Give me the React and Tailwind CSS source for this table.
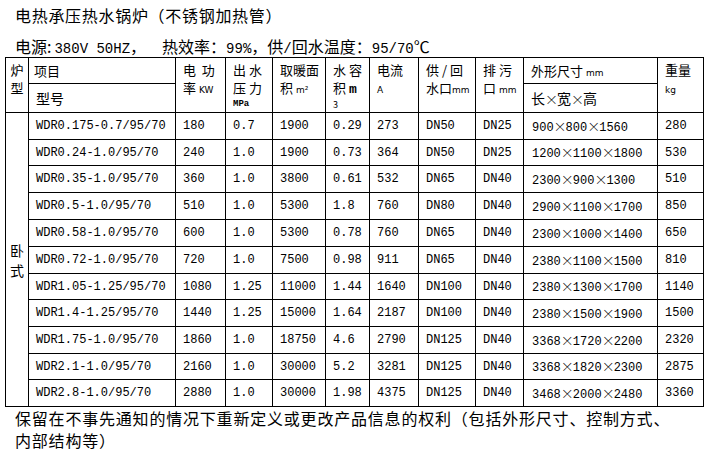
import React from "react";

const rows = [
  ["WDR0.175-0.7/95/70", "180", "0.7", "1900", "0.29", "273", "DN50", "DN25", ["900", "800", "1560"], "280"],
  ["WDR0.24-1.0/95/70", "240", "1.0", "1900", "0.73", "364", "DN50", "DN25", ["1200", "1100", "1800"], "530"],
  ["WDR0.35-1.0/95/70", "360", "1.0", "3800", "0.61", "532", "DN65", "DN40", ["2300", "900", "1300"], "510"],
  ["WDR0.5-1.0/95/70", "510", "1.0", "5300", "1.8", "760", "DN80", "DN40", ["2900", "1100", "1700"], "850"],
  ["WDR0.58-1.0/95/70", "600", "1.0", "5300", "0.78", "760", "DN65", "DN40", ["2300", "1000", "1400"], "650"],
  ["WDR0.72-1.0/95/70", "720", "1.0", "7500", "0.98", "911", "DN65", "DN40", ["2380", "1100", "1500"], "810"],
  ["WDR1.05-1.25/95/70", "1080", "1.25", "11000", "1.44", "1640", "DN100", "DN40", ["2380", "1300", "1700"], "1140"],
  ["WDR1.4-1.25/95/70", "1440", "1.25", "15000", "1.64", "2187", "DN100", "DN40", ["2380", "1500", "1900"], "1500"],
  ["WDR1.75-1.0/95/70", "1860", "1.0", "18750", "4.6", "2790", "DN125", "DN40", ["3368", "1720", "2200"], "2320"],
  ["WDR2.1-1.0/95/70", "2160", "1.0", "30000", "5.2", "3281", "DN125", "DN40", ["3368", "1820", "2300"], "2875"],
  ["WDR2.8-1.0/95/70", "2880", "1.0", "30000", "1.98", "4375", "DN125", "DN40", ["3468", "2000", "2480"], "3360"],
];

const heights = ["h-[27px]", "h-[26px]", "h-[27px]", "h-[27px]", "h-[27px]", "h-[27px]", "h-[26px]", "h-[27px]", "h-[27px]", "h-[26px]", "h-[27px]"];

function Times() {
  return (
    <span className="inline-block w-[12px] text-center font-['Noto_Sans_CJK_SC',sans-serif] text-[13px] font-light">×</span>
  );
}

function Lat({ children }) {
  return <span className="font-['DejaVu_Sans',sans-serif] text-[9px] text-black">{children}</span>;
}

function Mono({ children, className = "" }) {
  return <span className={"font-['Liberation_Mono',monospace] text-[14px] tracking-normal " + className}>{children}</span>;
}

const th = "border border-black align-top text-left font-normal pl-[7px] pr-[2px] pt-[3px] leading-[18px] text-[13px]";
const td = "border border-black align-middle text-left pl-[7px] pr-0 text-[12px] leading-none whitespace-nowrap";

export default function App() {
  return (
    <div className="w-[708px] h-[455px] bg-white text-black overflow-hidden antialiased font-['Noto_Sans_CJK_SC',sans-serif]">
      <div className="pl-[15px] h-[30px] leading-[30px] text-[16px] tracking-[0.7px]">电热承压热水锅炉（不锈钢加热管）</div>
      <div className="pl-[15px] h-[27px] leading-[32px] text-[16px] whitespace-nowrap flex items-baseline">
        <span>电源:</span>
        <Mono className="ml-[3px]">380V 50HZ</Mono>
        <span>，</span>
        <span className="inline-block w-[16px]"></span>
        <span>热效率：</span>
        <Mono>99%</Mono>
        <span>，供</span>
        <Mono>/</Mono>
        <span>回水温度：</span>
        <Mono>95/70</Mono>
        <span>℃</span>
      </div>
      <table className="ml-[5px] w-[699px] table-fixed border-collapse border border-black">
        <colgroup>
          <col className="w-[23px]" />
          <col className="w-[147px]" />
          <col className="w-[50px]" />
          <col className="w-[47px]" />
          <col className="w-[53px]" />
          <col className="w-[44px]" />
          <col className="w-[49px]" />
          <col className="w-[57px]" />
          <col className="w-[48px]" />
          <col className="w-[134px]" />
          <col className="w-[46px]" />
        </colgroup>
        <thead>
          <tr className="h-[26px]">
            <th rowSpan={2} className="border border-black align-top text-center font-normal text-[13px] leading-[18px] pt-[3px] px-0">
              炉<br />型
            </th>
            <th className="border border-black align-middle text-left font-normal pl-[5px] text-[13px] leading-none">项目</th>
            <th rowSpan={2} className={th}>
              电&nbsp;&nbsp;功<br />率 <Lat>KW</Lat>
            </th>
            <th rowSpan={2} className={th + " pl-[4px]"}>
              出&nbsp;水<br />压&nbsp;力<br />
              <span className="font-['Liberation_Mono',monospace] text-[9px] font-bold leading-[14px] block">MPa</span>
            </th>
            <th rowSpan={2} className={th}>
              取暖面<br />积 <Lat>m²</Lat>
            </th>
            <th rowSpan={2} className={th}>
              水&nbsp;容<br />积&nbsp;<span className="font-['Liberation_Mono',monospace] font-bold text-[13px]">m</span>
              <br />
              <span className="text-[9px] leading-[12px] block">3</span>
            </th>
            <th rowSpan={2} className={th}>
              电流<br /><Lat>A</Lat>
            </th>
            <th rowSpan={2} className={th}>
              供&nbsp;/&nbsp;回<br />水口<Lat>mm</Lat>
            </th>
            <th rowSpan={2} className={th}>
              排&nbsp;污<br />口 <Lat>mm</Lat>
            </th>
            <th className="border border-black align-middle text-left font-normal pl-[7px] text-[13px] leading-none">
              外形尺寸 <Lat>mm</Lat>
            </th>
            <th rowSpan={2} className={th}>
              重量<br /><Lat>kg</Lat>
            </th>
          </tr>
          <tr className="h-[29px]">
            <th className="border border-black align-middle text-left font-normal pl-[7px] text-[14px] leading-none">型号</th>
            <th className="border border-black align-middle text-left font-normal pl-[7px] text-[14px] leading-none">
              长<Times />宽<Times />高
            </th>
          </tr>
        </thead>
        <tbody className="font-['Liberation_Mono','Noto_Sans_CJK_SC',monospace]">
          {rows.map((r, i) => (
            <tr key={i} className={heights[i]}>
              {i === 0 && (
                <td rowSpan={11} className="border border-black align-middle text-center px-0 font-['Noto_Sans_CJK_SC',sans-serif] text-[14px] leading-[20px]">
                  卧<br />式
                </td>
              )}
              <td className={td}>{r[0]}</td>
              <td className={td}>{r[1]}</td>
              <td className={td + " pl-[5px]"}>{r[2]}</td>
              <td className={td}>{r[3]}</td>
              <td className={td}>{r[4]}</td>
              <td className={td}>{r[5]}</td>
              <td className={td}>{r[6]}</td>
              <td className={td}>{r[7]}</td>
              <td className={td + " pl-[8px]"}>
                {r[8][0]}
                <Times />
                {r[8][1]}
                <Times />
                {r[8][2]}
              </td>
              <td className={td}>{r[9]}</td>
            </tr>
          ))}
        </tbody>
      </table>
      <div className="pl-[15px] text-[16px] leading-[22px] tracking-[0.8px] whitespace-nowrap">
        保留在不事先通知的情况下重新定义或更改产品信息的权利（包括外形尺寸、控制方式、
        <br />
        内部结构等）
      </div>
    </div>
  );
}
